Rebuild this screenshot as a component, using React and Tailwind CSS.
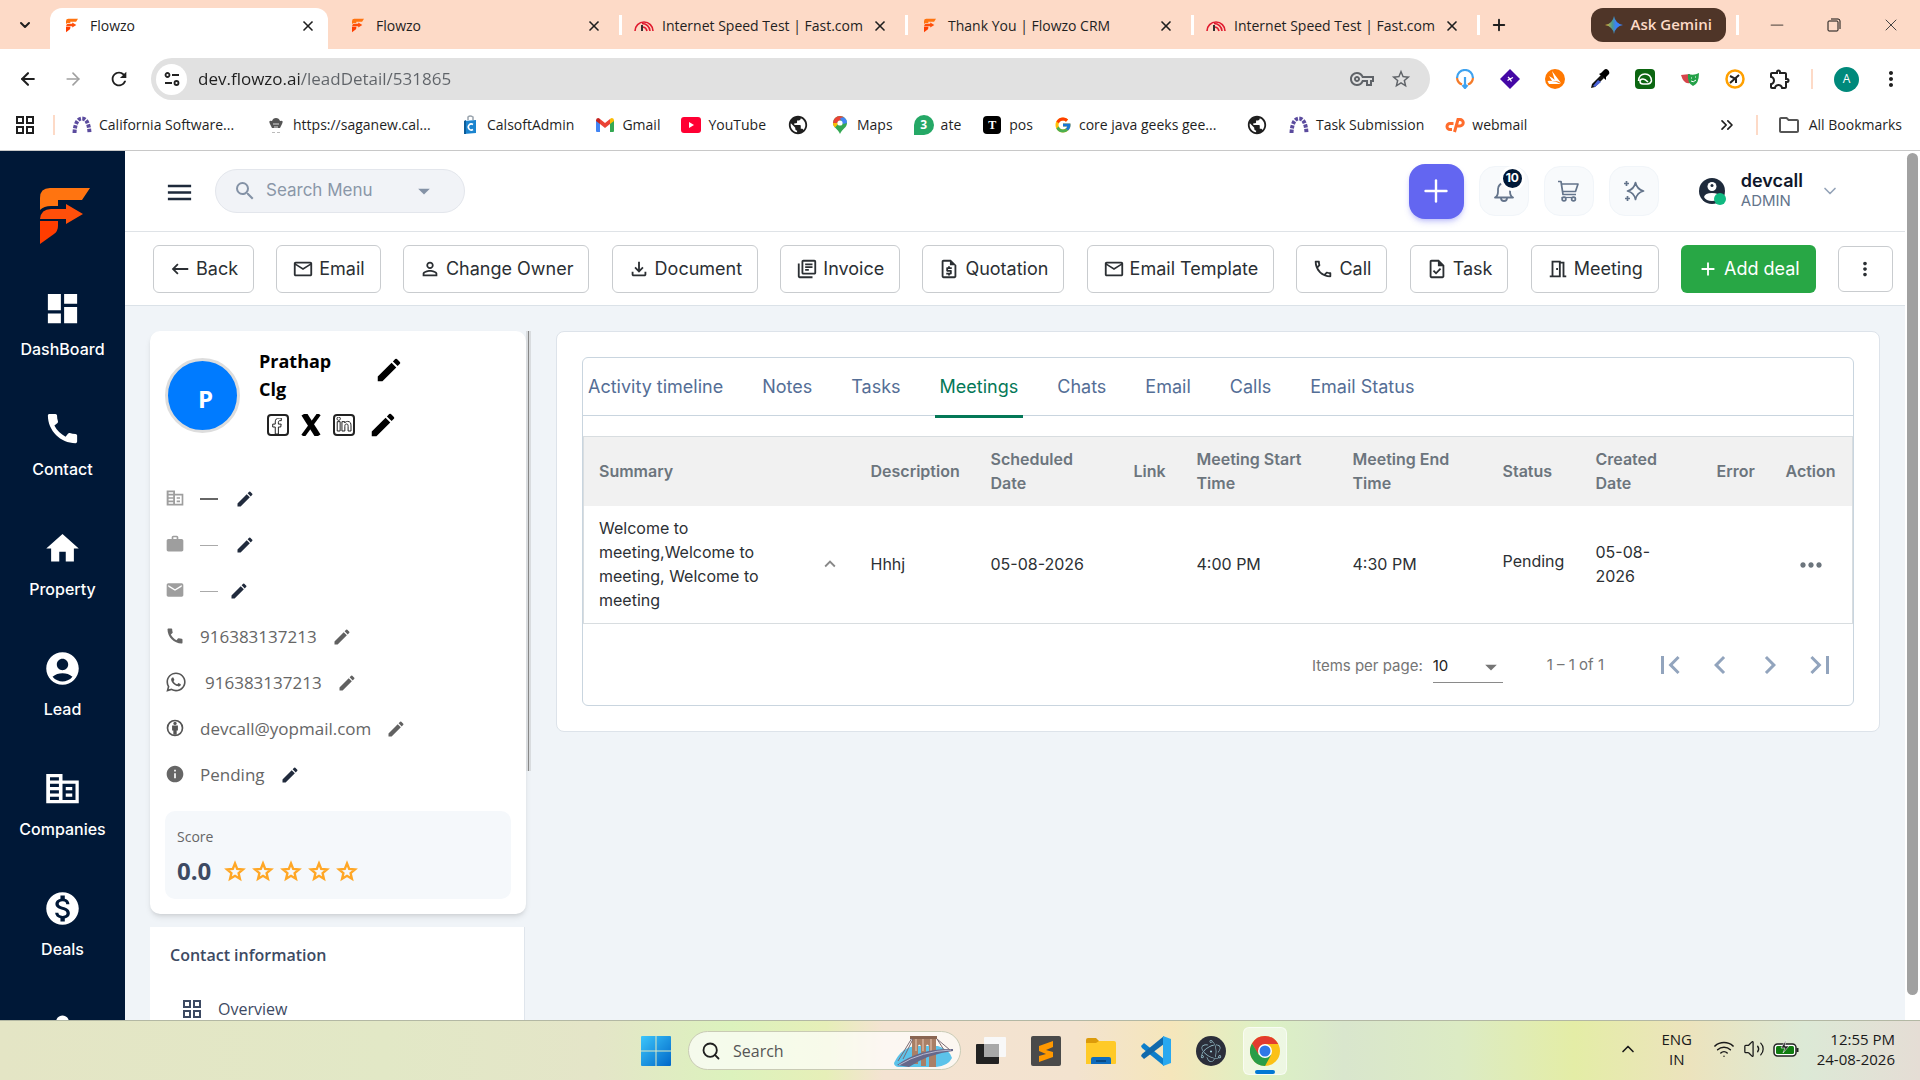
import { useState } from "react"
import {
  MdAccountCircle,
  MdAdd,
  MdArrowDropDown,
  MdCall,
  MdChevronLeft,
  MdChevronRight,
  MdDashboard,
  MdEdit,
  MdEmail,
  MdFirstPage,
  MdHome,
  MdInfo,
  MdKeyboardArrowUp,
  MdKeyboardBackspace,
  MdLastPage,
  MdMenu,
  MdMonetizationOn,
  MdMoreHoriz,
  MdMoreVert,
  MdOutlineCall,
  MdOutlineEmail,
  MdOutlineExtension,
  MdOutlineFileDownload,
  MdOutlineFolder,
  MdOutlineGridView,
  MdOutlineLibraryBooks,
  MdOutlineMeetingRoom,
  MdOutlineRequestQuote,
  MdOutlineTask,
  MdOutlineVpnKey,
  MdPerson,
  MdPersonOutline,
  MdPublic,
  MdRefresh,
  MdSearch,
  MdStarBorder,
  MdWork
} from "react-icons/md"
import { FaFacebookF, FaLinkedinIn, FaWhatsapp } from "react-icons/fa"
import { FcGoogle } from "react-icons/fc"
import { SiElectron } from "react-icons/si"
import { ArrowLeft, ArrowRight, ChevronDown, ChevronsRight, ChevronUp, Minus, Plus, Search, Volume2, Wifi, X } from "lucide-react"
import clsx from "clsx"

/* ---------- logos ---------- */

function FlowzoLogo({ className }) {
  return (
    <svg viewBox="0 0 50 56" className={className} aria-hidden="true">
      <path d="M0 22V10Q0 0 10 0h40l-8 12H18v6h-7Q4 18 0 22Z" fill="#ff7410" />
      <path d="M0 31q1-10 11-10h15v-5l17 10-17 10v-5Z" fill="#ff4f0a" />
      <path d="M0 33h18v5q0 5-4 8L0 56Z" fill="#ff3d00" />
    </svg>
  )
}

function SpeedIcon() {
  return (
    <svg viewBox="0 0 20 16" className="w-5 h-4" fill="none" stroke="#e01b2f" strokeWidth="1.6">
      <path d="M1 13a9 9 0 0 1 18 0" />
      <path d="M8 5.500a8 8 0 0 1 8 7.500" />
      <path d="M9 9a5 5 0 0 1 4 4" />
      <path d="M8 7v6" stroke="#333" strokeWidth="2" />
    </svg>
  )
}

function ArcIcon() {
  return (
    <svg viewBox="0 0 20 20" className="size-5" fill="none">
      <path d="M2.500 18C3 8 6 3.500 10 3.500S17 8 17.500 18" stroke="#5b4b9e" strokeWidth="4" strokeDasharray="3.200 1.300" />
    </svg>
  )
}

function GmailIcon() {
  return (
    <svg viewBox="0 0 20 16" className="w-5 h-4">
      <path d="M1 3v11q0 1 1 1h3V6Z" fill="#4285f4" />
      <path d="M19 3v11q0 1-1 1h-3V6Z" fill="#34a853" />
      <path d="M1 3.500Q1 1 3 1q1 0 2 1v5L1 4Z" fill="#c5221f" />
      <path d="M19 3.500Q19 1 17 1q-1 0-2 1v5l4-3Z" fill="#fbbc04" />
      <path d="M5 2l5 4 5-4v5l-5 4-5-4Z" fill="#ea4335" />
    </svg>
  )
}

function MapsIcon() {
  return (
    <svg viewBox="0 0 20 20" className="size-5">
      <path d="M10 1a7 7 0 0 0-7 7c0 4.500 5 6 7 11 2-5 7-6.500 7-11a7 7 0 0 0-7-7Z" fill="#34a853" />
      <path d="M10 1a7 7 0 0 0-7 7l3 .500L14 2Z" fill="#ea4335" />
      <path d="M14 2.300A7 7 0 0 1 17 8l-4 1-3-6Z" fill="#4285f4" />
      <path d="M3 8c0 2 1 3.500 2 4.500L9 8Z" fill="#fbbc04" />
      <circle cx="10" cy="8" r="2.600" fill="#fff" />
    </svg>
  )
}

function BagIcon() {
  return (
    <svg viewBox="0 0 20 20" className="size-5">
      <path d="M8 5V2q2-2 5 0v3" fill="none" stroke="#9aa4ad" strokeWidth="1.500" />
      <path d="M4 6l12-1v13L4 19Z" fill="#1b84cf" />
      <path d="M4 6l2-1v14H4Z" fill="#0c5c99" />
      <path d="M13 9.500a3 3 0 1 0 0 5" fill="none" stroke="#fff" strokeWidth="1.600" />
    </svg>
  )
}

function SagaIcon() {
  return (
    <svg viewBox="0 0 20 20" className="size-5" fill="#555">
      <path d="M4 9q-2-4 2-3 1-3 4-3t4 3q4-1 2 3l-2 4H6Z" />
      <path d="M7 9h6M8 12h4" stroke="#ddd" />
      <path d="M6 17.500h3M11 17.500h3" stroke="#bbb" />
    </svg>
  )
}

function CpanelIcon() {
  return (
    <svg viewBox="0 0 20 16" className="w-5 h-4" fill="none" stroke="#ff6c2c" strokeWidth="3">
      <path d="M8.500 6.500H5a3 3 0 0 0 0 6h2" />
      <path d="M9.500 15L13 2.500h2a3 3 0 0 1 0 6.500h-2.500" />
    </svg>
  )
}

function WindowsLogo() {
  return (
    <svg viewBox="0 0 30 30" className="size-[30px]">
      <defs>
        <linearGradient id="win" x1="0" y1="0" x2="1" y2="1">
          <stop offset="0" stopColor="#3cc6fb" />
          <stop offset="1" stopColor="#0067c8" />
        </linearGradient>
      </defs>
      <path d="M1 0h13.500v14.500H0V1q0-1 1-1ZM15.500 0H29q1 0 1 1v13.500H15.500ZM0 15.500h14.500V30H1q-1 0-1-1ZM15.500 15.500H30V29q0 1-1 1H15.500Z" fill="url(#win)" />
    </svg>
  )
}

function BridgeArt() {
  return (
    <svg viewBox="0 0 60 34" className="w-[60px] h-[34px]">
      <path d="M0 29Q8 12 24 12h20q12 4 14 12-4 8-16 9H4Q0 32 0 29Z" fill="#5cc3ea" />
      <path d="M18 3h24v30h-7V12q-2-3-3 0v20h-5V12q-2-3-3 0v18h-6Z" fill="#a97f66" />
      <path d="M16 2h27v3H16Z" fill="#8a6552" />
      <path d="M22 5v12M29 5v12M37 5v12" stroke="#d3b39d" strokeWidth="1.500" />
      <path d="M3 31Q26 14 59 15v2Q34 20 15 33Z" fill="#66688a" />
      <path d="M5 31Q28 17 57 16" stroke="#b9bad0" fill="none" />
      <path d="M4 27L18 4M9 25L19 5M43 5l13 11M43 5l7 11" stroke="#7b6a73" fill="none" />
    </svg>
  )
}

function TaskViewIcon() {
  return (
    <svg viewBox="0 0 30 30" className="size-[30px]">
      <rect x="0" y="8" width="23" height="20" rx="1" fill="#222" />
      <rect x="8" y="1" width="22" height="20" rx="1" fill="#f8f8f8" />
      <rect x="8" y="8" width="15" height="13" fill="#a8a8a8" />
    </svg>
  )
}

function SublimeIcon() {
  return (
    <svg viewBox="0 0 30 30" className="size-[30px]">
      <rect width="30" height="30" rx="2" fill="#4a4a4a" />
      <path d="M22 5v6l-7 3 7 2v5L8 26v-6l7-2-7-3v-5Z" fill="#ff9800" />
    </svg>
  )
}

function ExplorerIcon() {
  return (
    <svg viewBox="0 0 30 30" className="size-[30px]">
      <path d="M0 4q0-2 2-2h8l3 3v5H0Z" fill="#dc9b0a" />
      <path d="M0 7h10l3-2h15q2 0 2 2v20q0 1-1 1H0Z" fill="#ffca28" />
      <path d="M5 28v-5q0-2 2-2h16q2 0 2 2v5Z" fill="#0f6cbd" />
      <path d="M10 25h10" stroke="#073f73" strokeWidth="1.500" />
    </svg>
  )
}

function CodeIcon() {
  return (
    <svg viewBox="0 0 30 30" className="size-[30px]">
      <path d="M0 10l3-3 20 16v7L1 12Z" fill="#0d7fcb" />
      <path d="M0 20l3 3L23 8V0L1 18Z" fill="#1069ac" />
      <path d="M22 0l8 3v24l-8 3Z" fill="#28a8f0" />
    </svg>
  )
}

function ChromeIcon() {
  return (
    <svg viewBox="0 0 30 30" className="size-[30px]">
      <circle cx="15" cy="15" r="15" fill="#fbc116" />
      <path d="M15 8h13.200A15 15 0 0 0 2 7.500L8 18Z" fill="#e33b2e" />
      <path d="M2 7.500A15 15 0 0 0 15 30l6-11H9Z" fill="#2a9d48" />
      <circle cx="15" cy="15" r="7" fill="#fff" />
      <circle cx="15" cy="15" r="5.500" fill="#2f78e8" />
    </svg>
  )
}

function CompanyIcon({ className }) {
  return (
    <svg viewBox="0 0 24 24" className={className} fill="currentColor">
      <path
        fillRule="evenodd"
        d="M2 3h10v4h10v14H2ZM4.300 5v2h5.500V5ZM4.300 9v2h5.500V9ZM4.300 13v2h5.500v-2ZM4.300 17v2h5.500v-2ZM12 9v10h8V9ZM14 11h4v2h-4ZM14 15h4v2h-4Z"
      />
    </svg>
  )
}

function StarIcon() {
  return (
    <svg viewBox="0 0 24 24" className="size-6" fill="none" stroke="#ffa726" strokeWidth="2.400">
      <path d="M12 4.500l2.200 5.400 5.800.500-4.400 3.800 1.300 5.600-4.900-3-4.900 3 1.300-5.600L4 10.400l5.800-.500Z" />
    </svg>
  )
}

/* ---------- browser ---------- */

const browserTabs = [
  { title: "Flowzo", kind: "flowzo", active: true },
  { title: "Flowzo", kind: "flowzo", line: true },
  { title: "Internet Speed Test | Fast.com", kind: "speed", line: true },
  { title: "Thank You | Flowzo CRM", kind: "flowzo", line: true },
  { title: "Internet Speed Test | Fast.com", kind: "speed", line: true }
]

function TabStrip() {
  return (
    <div className="flex items-end h-[49px] bg-[#fddac7]">
      <button aria-label="Search tabs" className="w-[50px] h-[49px] flex items-center justify-center">
        <ChevronDown className="size-4" strokeWidth={3} />
      </button>
      {browserTabs.map((tab, i) => (
        <div key={i} className="relative w-[286px] h-[41px] pr-2 shrink-0">
          <div className={clsx("flex items-center h-full pl-3 pr-3 pb-1.5", tab.active && "bg-white rounded-t-xl")}>
            <span className="w-5 mr-2 flex justify-center">
              {tab.kind === "flowzo" ? <FlowzoLogo className="w-3 h-[17px]" /> : <SpeedIcon />}
            </span>
            <span className="flex-1 text-[14px] whitespace-nowrap">{tab.title}</span>
            <button aria-label="Close tab"><X className="size-4" strokeWidth={2.500} /></button>
          </div>
          {tab.line && <span className="absolute right-0 top-[7px] w-[3px] h-5 bg-white" />}
        </div>
      ))}
      <button aria-label="New tab" className="h-[49px] pl-2.5"><Plus className="size-[18px]" strokeWidth={2.500} /></button>
      <div className="ml-auto h-[49px] flex items-center">
        <button className="flex items-center gap-2 h-[34px] px-3.5 rounded-xl bg-[#4f3528] text-[#fddac7] text-[15px] font-semibold">
          <svg viewBox="0 0 20 20" className="size-[18px]">
            <defs>
              <linearGradient id="gem">
                <stop offset="0" stopColor="#f7b928" />
                <stop offset="0.400" stopColor="#4b9a8c" />
                <stop offset="0.600" stopColor="#3b82f6" />
              </linearGradient>
            </defs>
            <path d="M10 0q1.500 8.500 10 10-8.500 1.500-10 10Q8.500 11.500 0 10 8.500 8.500 10 0Z" fill="url(#gem)" />
          </svg>
          Ask Gemini
        </button>
        <span className="w-[3px] h-5 ml-[10px] bg-white" />
        <button aria-label="Minimize" className="w-[58px] ml-[9px] flex justify-center"><Minus className="size-5 text-[#6b5d55]" strokeWidth={1.500} /></button>
        <button aria-label="Restore" className="w-[56px] flex justify-center">
          <svg viewBox="0 0 14 14" className="size-3.5" fill="none" stroke="#111">
            <rect x="1" y="3" width="10" height="10" rx="1" />
            <path d="M4 1h7q2 0 2 2v8" />
          </svg>
        </button>
        <button aria-label="Close" className="w-[58px] flex justify-center"><X className="size-5 text-[#444]" strokeWidth={1.200} /></button>
      </div>
    </div>
  )
}

function Extensions() {
  return (
    <div className="flex items-center gap-[25px]">
      <svg viewBox="0 0 20 20" className="size-5" fill="none" strokeWidth="2.200">
        <path d="M7 15.500A8 8 0 0 1 2 9" stroke="#f47b2a" />
        <path d="M2 9a8 8 0 0 1 16 0" stroke="#3ea2ef" />
        <path d="M18 9a8 8 0 0 1-5 6.500" stroke="#f47b2a" />
        <path d="M10 8v11M7.500 16l2.500 3 2.500-3" stroke="#3ea2ef" />
      </svg>
      <svg viewBox="0 0 20 20" className="size-5">
        <path d="M10 0l10 10-10 10L0 10Z" fill="#4407a5" />
        <path d="M8 8l2 2 3-1.500M7.500 11.500l2.500-1.500 1.500 2.500" stroke="#fff" fill="none" strokeWidth="1.300" />
      </svg>
      <svg viewBox="0 0 20 20" className="size-5">
        <circle cx="10" cy="10" r="10" fill="#ff7800" />
        <path d="M7 2l9 12q-3-2-6-2ZM4 7q4 2 7 5H7ZM2.500 12q6-1 13.500 3-6 0-12 0Z" fill="#fff" />
      </svg>
      <svg viewBox="0 0 20 20" className="size-5">
        <path d="M11 6l3 3-9 9-4 1 1-4Z" fill="#111" />
        <path d="M8 11l3 2-6 5-2-1Z" fill="#4a63d8" />
        <path d="M9 5l2-1 3-3q2-2 4 0t1 4l-3 3v3Z" fill="#000" />
      </svg>
      <svg viewBox="0 0 20 20" className="size-5">
        <rect width="20" height="20" rx="4" fill="#0c6611" />
        <path d="M3.500 12Q4 5 10 5t6.500 7q-1 3-4 3H8q-3 0-3-2.500T8 10q2 0 5 3" stroke="#fff" fill="none" strokeWidth="1.500" />
      </svg>
      <svg viewBox="0 0 20 20" className="size-5">
        <path d="M1 6l9-1v9q-6 2-9-8Z" fill="#d6454b" />
        <path d="M8 5q6 2 11-1 0 11-6 13-6-3-5-12Z" fill="#24a148" />
        <path d="M11 9h1M15 8h1M11 12q2 2 5-1" stroke="#fff" fill="none" />
      </svg>
      <svg viewBox="0 0 20 20" className="size-5">
        <circle cx="10" cy="10" r="8.500" fill="#fff" stroke="#ffa000" strokeWidth="2.500" />
        <path d="M5 7l6 3v4M14 6l-9 8" stroke="#222" strokeWidth="2" fill="none" />
      </svg>
      <MdOutlineExtension className="size-6 -m-0.5 text-[#222]" />
    </div>
  )
}

function Toolbar() {
  return (
    <div className="flex items-center h-[60px] bg-white">
      <div className="flex items-center w-[151px] pl-[18px] gap-[25px]">
        <button aria-label="Back"><ArrowLeft className="size-5" strokeWidth={2.500} /></button>
        <button aria-label="Forward"><ArrowRight className="size-5 text-[#a0a0a0]" /></button>
        <button aria-label="Reload"><MdRefresh className="size-[22px]" /></button>
      </div>
      <div className="flex-1 flex items-center h-[42px] rounded-full bg-[#e1e1e1] pl-[5px] pr-[18px]">
        <button aria-label="Site information" className="size-[31px] rounded-full bg-white flex items-center justify-center">
          <svg viewBox="0 0 16 16" className="size-4" fill="none" stroke="#222" strokeWidth="1.800">
            <circle cx="3.500" cy="4" r="2" />
            <path d="M8 4h7M1 12h7" />
            <circle cx="12.500" cy="12" r="2" />
          </svg>
        </button>
        <input
          aria-label="Address"
          defaultValue="dev.flowzo.ai/leadDetail/531865"
          className="flex-1 ml-[11px] text-[17px] outline-none text-transparent bg-clip-text bg-[linear-gradient(to_right,#1f1f1f_103px,#5f6368_103px)]"
        />
        <button aria-label="Passwords" className="mr-4"><MdOutlineVpnKey className="size-6 text-[#5f6368]" /></button>
        <button aria-label="Bookmark this page"><MdStarBorder className="size-[22px] text-[#5f6368]" /></button>
      </div>
      <div className="flex items-center pl-[25px]">
        <Extensions />
        <span className="w-0.5 h-5 mx-[21px] bg-[#fddac7]" />
        <button className="size-[25px] rounded-full bg-[#00897b] text-white text-[12px]">A</button>
        <button aria-label="Menu" className="ml-5 mr-[17px]"><MdMoreVert className="size-6" /></button>
      </div>
    </div>
  )
}

const bookmarks = [
  { label: "California Software...", icon: <ArcIcon />, cut: true },
  { label: "https://saganew.cal...", icon: <SagaIcon />, cut: true },
  { label: "CalsoftAdmin", icon: <BagIcon /> },
  { label: "Gmail", icon: <GmailIcon /> },
  { label: "YouTube", icon: <svg viewBox="0 0 20 16" className="w-5 h-4"><rect y="0" width="20" height="16" rx="3" fill="#ff0033" /><path d="M8 5l5 3-5 3Z" fill="#fff" /></svg> },
  { label: "", icon: <MdPublic className="size-[22px]" /> },
  { label: "Maps", icon: <MapsIcon /> },
  { label: "ate", icon: <span className="size-5 rounded-full rounded-bl-xs bg-[#25a866] text-white text-[12px] leading-5 font-bold text-center">3</span> },
  { label: "pos", icon: <span className="size-[18px] mx-px rounded bg-black text-white text-[12px] leading-[18px] font-bold text-center font-['Liberation_Serif',serif]">T</span> },
  { label: "core java geeks gee...", icon: <FcGoogle className="size-[18px]" />, cut: true },
  { label: "", icon: <MdPublic className="size-[22px]" /> },
  { label: "Task Submission", icon: <ArcIcon /> },
  { label: "webmail", icon: <CpanelIcon /> }
]

function BookmarksBar() {
  return (
    <div className="flex items-center h-[42px] bg-white border-b border-[#c8c8c8] text-[14px] pb-2.5">
      <button aria-label="Apps" className="ml-[13px]"><MdOutlineGridView className="size-6" /></button>
      <span className="w-0.5 h-5 ml-4 bg-[#fddac7]" />
      <nav className="flex items-center gap-[21px] ml-[17px]">
        {bookmarks.map((b, i) => (
          <a key={i} href="#" aria-label={b.label || "Site"} className="flex items-center gap-[7px] whitespace-nowrap">
            {b.icon}
            {b.label && <span className={clsx(b.cut && "w-[146px]")}>{b.label}</span>}
          </a>
        ))}
      </nav>
      <button aria-label="More bookmarks" className="ml-auto"><ChevronsRight className="size-5" /></button>
      <span className="w-0.5 h-5 mx-[19px] bg-[#fddac7]" />
      <button className="flex items-center gap-2 mr-[18px]"><MdOutlineFolder className="size-6 text-[#555]" /> All Bookmarks</button>
    </div>
  )
}

/* ---------- app ---------- */

const menu = [
  { label: "DashBoard", Icon: MdDashboard },
  { label: "Contact", Icon: MdCall },
  { label: "Property", Icon: MdHome },
  { label: "Lead", Icon: MdAccountCircle },
  { label: "Companies", Icon: CompanyIcon },
  { label: "Deals", Icon: MdMonetizationOn }
]

function Sidebar() {
  return (
    <aside className="w-[125px] shrink-0 bg-[#001837] text-white overflow-hidden">
      <a href="#" aria-label="Flowzo" className="flex justify-center pt-[37px] pl-1 mb-[45px]"><FlowzoLogo className="w-[50px] h-14" /></a>
      <nav className="flex flex-col">
        {menu.map(({ label, Icon }) => (
          <a key={label} href="#" className="flex flex-col items-center gap-[9px] h-[120px] shrink-0 text-[16px] font-medium">
            <Icon className="size-[39px]" />
            {label}
          </a>
        ))}
        <a href="#" aria-label="Users" className="flex justify-center"><MdPerson className="size-[39px]" /></a>
      </nav>
    </aside>
  )
}

const headerButton = "relative size-[50px] rounded-2xl bg-[#f8fafc] border border-[#f1f5f9] flex items-center justify-center text-[#64748b]"

function Header() {
  return (
    <header className="flex items-center h-[81px] bg-white border-b border-[#dfe3e7] pl-[39px] pr-[65px]">
      <button aria-label="Toggle menu" className="pt-0.5"><MdMenu className="size-[31px] text-[#1e2a3b]" /></button>
      <label className="flex items-center w-[250px] h-11 ml-5 px-[17px] rounded-full bg-[#f1f3f7] border border-[#e3e6ec] text-[#8492a6]">
        <MdSearch className="size-6 shrink-0" />
        <input aria-label="Search Menu" placeholder="Search Menu" className="w-[140px] ml-[9px] text-[17px] outline-none placeholder:text-[#8a97a8]" />
        <MdArrowDropDown className="size-7 ml-1 shrink-0" />
      </label>
      <div className="flex items-center gap-[15px] ml-auto">
        <button aria-label="Add" className="size-[55px] rounded-2xl bg-[#6366f1] text-white flex items-center justify-center shadow-md shadow-[#6366f1]/30">
          <Plus className="size-9" strokeWidth={1.600} />
        </button>
        <button aria-label="Notifications" className={headerButton}>
          <svg viewBox="0 0 20 22" className="w-5 h-[22px]" fill="none" stroke="currentColor" strokeWidth="1.800">
            <path d="M1 17.500q3-1.500 3-6V9a6 6 0 0 1 12 0v2.500q0 4.500 3 6Z" strokeLinejoin="round" />
            <path d="M7 18a3 3 0 0 0 6 0" />
          </svg>
          <span className="absolute right-[3px] -top-px size-[25px] rounded-full bg-[#001837] border-[3px] border-white text-white text-[12px] leading-[18px] font-bold text-center">10</span>
        </button>
        <button aria-label="Cart" className={headerButton}>
          <svg viewBox="0 0 22 22" className="size-[22px]" fill="none" stroke="currentColor" strokeWidth="1.700" strokeLinejoin="round">
            <path d="M0 1.500h3l2 13h13M3.500 4H20l-2.500 7.500h-13" />
            <path d="M3.500 17.500h14" strokeWidth="1.200" />
            <circle cx="6" cy="19" r="1.900" />
            <circle cx="15.500" cy="19" r="1.900" />
          </svg>
        </button>
        <button aria-label="Assistant" className={headerButton}>
          <svg viewBox="0 0 22 22" className="size-[22px]" fill="none" stroke="currentColor" strokeWidth="1.700" strokeLinejoin="round">
            <path d="M12.500 2.500q1.500 7 8 8.500-6.500 1.500-8 8.500Q11 12.500 4.500 11q6.500-1.500 8-8.500Z" />
            <path d="M3.500 1v5M1 3.500h5M4.500 16v5M2 18.500h5" />
          </svg>
        </button>
      </div>
      <button className="flex items-center ml-10 text-left">
        <span className="relative mr-4">
          <svg viewBox="0 0 26 26" className="size-[26px]">
            <circle cx="13" cy="13" r="13" fill="#1e2a3b" />
            <circle cx="13" cy="8.500" r="4.500" fill="#fff" />
            <circle cx="13" cy="7.500" r="1.500" fill="#1e2a3b" />
            <path d="M5 19q1-4 8-4t8 4q-2 4-8 4t-8-4Z" fill="#fff" />
          </svg>
          <span className="absolute -right-px -bottom-px size-3 rounded-full bg-[#10b981]" />
        </span>
        <span className="flex flex-col">
          <span className="text-[18px] leading-5 font-semibold text-[#0f172a]">devcall</span>
          <span className="text-[15px] leading-5 text-[#64748b]">ADMIN</span>
        </span>
        <ChevronDown className="size-5 ml-[17px] text-[#94a3b8]" />
      </button>
    </header>
  )
}

const actions = [
  { label: "Back", Icon: MdKeyboardBackspace },
  { label: "Email", Icon: MdOutlineEmail },
  { label: "Change Owner", Icon: MdPersonOutline },
  { label: "Document", Icon: MdOutlineFileDownload },
  { label: "Invoice", Icon: MdOutlineLibraryBooks },
  { label: "Quotation", Icon: MdOutlineRequestQuote },
  { label: "Email Template", Icon: MdOutlineEmail },
  { label: "Call", Icon: MdOutlineCall },
  { label: "Task", Icon: MdOutlineTask },
  { label: "Meeting", Icon: MdOutlineMeetingRoom }
]

function ActionBar() {
  return (
    <div className="flex items-center justify-between h-[74px] bg-white border-b border-[#dbe2e8] pl-7 pr-3 text-[18px] text-[#2b2f33]">
      {actions.map(({ label, Icon }) => (
        <button key={label} className="flex items-center gap-[5px] h-12 px-[15px] rounded-md border border-[#c9cccf] whitespace-nowrap">
          <Icon className="size-[22px]" />
          {label}
        </button>
      ))}
      <button className="flex items-center gap-[5px] h-12 px-4 rounded-md bg-[#28a745] text-white whitespace-nowrap">
        <MdAdd className="size-[22px]" />
        Add deal
      </button>
      <button aria-label="More actions" className="flex items-center justify-center w-[55px] h-[46px] rounded-md border border-[#c9cccf]">
        <MdMoreVert className="size-[22px]" />
      </button>
    </div>
  )
}

function PersonBadge({ className }) {
  return (
    <svg viewBox="0 0 24 24" className={className} fill="currentColor">
      <circle cx="12" cy="12" r="9" fill="none" stroke="currentColor" strokeWidth="2" />
      <circle cx="12" cy="6.500" r="2" />
      <path d="M8.500 9h7v6H14v5h-4v-5H8.500Z" />
    </svg>
  )
}

const details = [
  { Icon: CompanyIcon, tone: "text-[#9e9e9e]", dash: "bg-[#666] h-0.5", dark: true },
  { Icon: MdWork, tone: "text-[#9e9e9e]", dash: "bg-[#aaa] h-px", dark: true },
  { Icon: MdEmail, tone: "text-[#9e9e9e]", dash: "bg-[#aaa] h-px", dark: true, near: true },
  { Icon: MdCall, tone: "text-[#666]", text: "916383137213" },
  { Icon: FaWhatsapp, tone: "text-[#555]", text: "916383137213", wide: true },
  { Icon: PersonBadge, tone: "text-[#555]", text: "devcall@yopmail.com" },
  { Icon: MdInfo, tone: "text-[#666]", text: "Pending", dark: true }
]

function ProfileCard() {
  return (
    <section className="bg-white rounded-[10px] shadow-md px-[15px] pb-[15px] pt-4">
      <div className="flex">
        <span className="size-[75px] mt-[11px] rounded-full border-[3px] border-[#ddd] bg-[#007bff] text-white text-[24px] font-bold flex items-center justify-center pl-1.5 pt-1.5">P</span>
        <div className="ml-[19px]">
          <div className="flex items-start">
            <h1 className="w-[115px] text-[18px] leading-7 font-bold text-black">Prathap<br />Clg</h1>
            <button aria-label="Edit name" className="pt-2"><MdEdit className="size-[30px] text-black" /></button>
          </div>
          <div className="flex items-center gap-[11px] pl-2 pt-[7px]">
            <a href="#" aria-label="Facebook" className="size-[22px] rounded-sm border-2 border-[#222] flex items-end justify-end pr-0.5">
              <FaFacebookF className="size-4 fill-white stroke-[#222] stroke-[32px]" />
            </a>
            <a href="#" aria-label="X">
              <svg viewBox="0 0 22 22" className="size-[22px]" stroke="#000" fill="none">
                <path d="M4 0L18 22" strokeWidth="6" />
                <path d="M19 0L3 22" strokeWidth="4" />
              </svg>
            </a>
            <a href="#" aria-label="LinkedIn" className="size-[22px] rounded-sm border-2 border-[#222] flex items-center justify-center">
              <FaLinkedinIn className="size-4 fill-white stroke-[#222] stroke-[32px]" />
            </a>
            <button aria-label="Edit links" className="ml-0.5"><MdEdit className="size-[30px] text-black" /></button>
          </div>
        </div>
      </div>
      <ul className="flex flex-col mt-9">
        {details.map(({ Icon, tone, text, dash, dark, near, wide }, i) => (
          <li key={i} className="flex items-center h-[46px] text-[17px] text-[#666]">
            <span className={clsx("shrink-0 pb-0.5", wide ? "w-10" : "w-[35px]", tone)}>
              <Icon className={clsx(wide ? "size-[22px]" : "size-5")} />
            </span>
            {text ? <span>{text}</span> : <span className={clsx("w-[18px]", dash)} />}
            <button aria-label="Edit" className={near ? "ml-[11px]" : text ? "ml-[15px]" : "ml-[17px]"}>
              <MdEdit className={clsx("size-5", dark ? "text-[#212b3d]" : "text-[#616161]")} />
            </button>
          </li>
        ))}
      </ul>
      <div className="mt-[13px] h-[88px] rounded-[10px] bg-[#f5f8fb] px-3 pt-3.5">
        <p className="text-[14px] leading-6 text-[#666]">Score</p>
        <div className="flex items-center gap-1 mt-1.5">
          <span className="mr-2 text-[24px] leading-8 font-bold text-[#3d4a63]">0.0</span>
          {[1, 2, 3, 4, 5].map((n) => (
            <StarIcon key={n} />
          ))}
        </div>
      </div>
    </section>
  )
}

const tabs = ["Activity timeline", "Notes", "Tasks", "Meetings", "Chats", "Email", "Calls", "Email Status"]

function MeetingsTable() {
  return (
    <table className="w-full table-fixed border border-[#d8dde0] text-left text-[16px] leading-6 text-[#2c3034]">
      <thead className="bg-[#f1f1f1] text-[#6c757d]">
        <tr className="h-[69px] [&>th]:px-[15px] [&>th]:font-semibold">
          <th className="w-[272px]">Summary</th>
          <th className="w-[120px]">Description</th>
          <th className="w-[143px]">Scheduled<br />Date</th>
          <th className="w-[63px]">Link</th>
          <th className="w-[156px]">Meeting Start<br />Time</th>
          <th className="w-[150px]">Meeting End<br />Time</th>
          <th className="w-[93px]">Status</th>
          <th className="w-[121px]">Created<br />Date</th>
          <th className="w-[69px]">Error</th>
          <th className="w-[82px]">Action</th>
        </tr>
      </thead>
      <tbody>
        <tr className="h-[118px] [&>td]:px-[15px]">
          <td>
            <div className="flex items-center justify-between">
              <span className="w-[180px]">Welcome to meeting,Welcome to meeting, Welcome to meeting</span>
              <button aria-label="Collapse"><MdKeyboardArrowUp className="size-[22px] text-[#888]" /></button>
            </div>
          </td>
          <td>Hhhj</td>
          <td>05-08-2026</td>
          <td></td>
          <td>4:00 PM</td>
          <td>4:30 PM</td>
          <td className="pb-1.5 whitespace-nowrap">Pending</td>
          <td>05-08-<br />2026</td>
          <td></td>
          <td>
            <button aria-label="Row actions" className="flex w-full justify-center pt-0.5"><MdMoreHoriz className="size-8 text-[#6c757d]" /></button>
          </td>
        </tr>
      </tbody>
    </table>
  )
}

function Paginator() {
  return (
    <div className="flex items-center justify-end h-[81px] pt-px pr-2 text-[15px] text-[#757575]">
      <label htmlFor="page-size" className="pt-[3px]">Items per page:</label>
      <div className="relative ml-2.5">
        <select id="page-size" className="appearance-none w-[70px] h-9 pt-1 border-b border-[#8a8a8a] text-[#212121] outline-none">
          <option>10</option>
          <option>25</option>
        </select>
        <MdArrowDropDown className="absolute -right-0.5 top-1.5 size-7 pointer-events-none" />
      </div>
      <span className="ml-11">1 – 1 of 1</span>
      <div className="flex ml-[41px] text-[#92a4bd]">
        {[MdFirstPage, MdChevronLeft, MdChevronRight, MdLastPage].map((Icon, i) => (
          <button key={i} aria-label={["First", "Previous", "Next", "Last"][i] + " page"} className="w-[50px] flex justify-center">
            <Icon className="size-9" />
          </button>
        ))}
      </div>
    </div>
  )
}

function LeadDetail() {
  const [tab, setTab] = useState("Meetings")

  return (
    <main className="flex-1 flex items-start min-h-0 overflow-hidden bg-[#f0f4f8] pl-[25px] pr-[26px] pt-[25px]">
      <div className="w-[376px] shrink-0 font-['Open_Sans',sans-serif]">
        <ProfileCard />
        <section className="mt-[13px] mr-px h-[200px] bg-white border-r border-[#dfe5ec] px-5 pt-3.5 text-[#3d4a63]">
          <h2 className="text-[16px] leading-7 font-semibold">Contact information</h2>
          <a href="#" className="flex items-center gap-3.5 mt-7 pl-2.5 text-[16px]">
            <MdOutlineGridView className="size-6" /> Overview
          </a>
        </section>
      </div>
      <div className="w-[5px] h-[440px] shrink-0 border-x-2 border-[#d9dcdf] bg-[#888]" />
      <section className="flex-1 ml-[25px] p-[25px] bg-white border border-[#dde3ea] rounded-lg">
        <div className="border border-[#c9d5df] rounded-md">
          <div role="tablist" className="flex gap-[29px] h-[58px] border-b border-[#c9d5df] text-[18px] text-[#546e96]">
            {tabs.map((t) => (
              <button
                key={t}
                role="tab"
                aria-selected={t === tab}
                onClick={() => setTab(t)}
                className={clsx("h-[60px] px-[5px] pb-px border-b-[3px] whitespace-nowrap", t === tab ? "border-[#047857] text-[#047857]" : "border-transparent")}
              >
                {t}
              </button>
            ))}
          </div>
          <div className="pt-5">
            <MeetingsTable />
          </div>
          <Paginator />
        </div>
      </section>
    </main>
  )
}

/* ---------- taskbar ---------- */

function Taskbar() {
  return (
    <footer className="relative flex items-center justify-center h-[60px] shrink-0 border-t border-[#b3b8a4] bg-[linear-gradient(to_right,#e4e5c5,#e2e8c6_20%,#e4e5c8_31%,#dcf2bd_38%,#e6efb8_43%,#f4e3d2_46%,#f3e3cf_56%,#f5e6bb_61%,#dcf1c4_66%,#d9e6cd_70%,#dcebc4_76%,#e4eda6_82%,#ece3bd_88%,#dce9d6_94%,#e5ddd5)]">
      <div className="flex items-center gap-[25px] ml-2">
        <button aria-label="Start"><WindowsLogo /></button>
        <label className="flex items-center w-[273px] h-[39px] -ml-2 -mr-2.5 pl-3 pr-1.5 rounded-full bg-white/70 border border-[#c9cbb5]">
          <Search className="size-5 shrink-0" strokeWidth={2.200} />
          <input aria-label="Search" placeholder="Search" className="flex-1 min-w-0 ml-3 text-[16px] outline-none placeholder:text-[#555]" />
          <BridgeArt />
        </label>
        <button aria-label="Task view"><TaskViewIcon /></button>
        <button aria-label="Sublime Text"><SublimeIcon /></button>
        <button aria-label="File Explorer"><ExplorerIcon /></button>
        <button aria-label="Code"><CodeIcon /></button>
        <button aria-label="Electron" className="size-[30px] rounded-full bg-[#2b2e3a] text-[#a5d4e0] flex items-center justify-center"><SiElectron className="size-[22px]" /></button>
        <button aria-label="Chrome" className="relative w-11 h-12 -ml-2 rounded-md bg-white/50 border border-white/60 flex items-center justify-center">
          <ChromeIcon />
          <span className="absolute bottom-0 w-5 h-1 rounded-full bg-[#0078d4]" />
        </button>
      </div>
      <div className="absolute right-[25px] inset-y-0 pb-[3px] flex items-center text-[15px] leading-5 text-[#1a1a1a]">
        <ChevronUp className="size-5 mr-[23px]" />
        <span className="w-8 text-center">ENG<br />IN</span>
        <Wifi className="size-[22px] ml-5 mr-2" strokeWidth={1.600} />
        <Volume2 className="size-[22px] mr-2" strokeWidth={1.400} />
        <svg viewBox="0 0 26 18" className="w-[26px] h-[18px] mr-[18px]">
          <rect x="1" y="4" width="22" height="12" rx="3.500" fill="#fff" stroke="#222" strokeWidth="1.500" />
          <rect x="3" y="6" width="18" height="8" rx="1.500" fill="#107c10" />
          <path d="M24.500 8v4" stroke="#222" strokeWidth="2" />
          <path d="M13 0L8 8h4l-2 5 6-7h-4Z" fill="#222" stroke="#fff" strokeWidth="0.600" />
        </svg>
        <span className="text-right">12:55 PM<br />24-08-2026</span>
      </div>
    </footer>
  )
}

export default function App() {
  return (
    <div className="h-screen flex flex-col overflow-hidden bg-white text-[#1f1f1f] font-['Open_Sans',sans-serif]">
      <div className="shrink-0">
        <TabStrip />
        <Toolbar />
        <BookmarksBar />
      </div>
      <div className="flex-1 flex min-h-0 font-[Inter,sans-serif]">
        <Sidebar />
        <div className="flex-1 min-w-0 flex flex-col">
          <Header />
          <ActionBar />
          <LeadDetail />
        </div>
        {/* page scrollbar */}
        <div className="w-[15px] shrink-0 bg-white px-0.5 pt-0.5 pb-[25px]">
          <div className="h-full rounded-full bg-[#a1a1a1]" />
        </div>
      </div>
      <Taskbar />
    </div>
  )
}
